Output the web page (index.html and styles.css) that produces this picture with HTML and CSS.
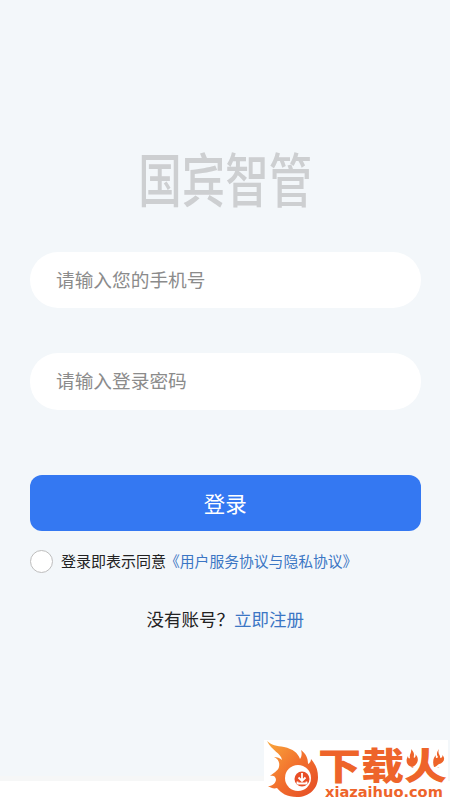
FILE: index.html
```
<!DOCTYPE html>
<html lang="zh-CN">
<head>
<meta charset="utf-8">
<title>国宾智管</title>
<link rel="stylesheet" href="styles.css">
</head>
<body>
<main class="screen">
  <h1 class="brand"><span class="brand-text">国宾智管</span></h1>
  <form class="form">
    <input class="field" type="tel" placeholder="请输入您的手机号">
    <input class="field" type="password" placeholder="请输入登录密码">
    <button class="submit" type="button">登录</button>
    <label class="agree"><span class="radio"></span><span class="agree-text">登录即表示同意<a class="link terms">《用户服务协议与隐私协议》</a></span></label>
  </form>
  <p class="register">没有账号？<a class="link">立即注册</a></p>
</main>
<aside class="mark">
  <svg class="flame" viewBox="0 0 54 60" aria-hidden="true">
    <defs>
      <linearGradient id="fire" x1="0" y1="0" x2="1" y2="1">
        <stop offset="0" stop-color="#f9a83c"/>
        <stop offset=".5" stop-color="#f2702d"/>
        <stop offset="1" stop-color="#e44a25"/>
      </linearGradient>
    </defs>
    <path fill="url(#fire)" d="M3 1C7 5 13 6 20 7C29 9 34 13 36 19C38 16 38 13 37 10C42 14 44 18 44 24C46 23 47 21 47 19C52 25 54 30 54 37C54 49 45 57 33 57C23 57 17 53 13 48C10 49 7 48 4 46C8 46 11 44 12 40C12 36 9 35 6 36C9 33 14 31 15 27C16 22 14 19 10 17C13 17 16 18 18 20C17 13 8 11 3 1Z"/>
    <circle cx="34" cy="38" r="13" fill="#fff"/>
    <circle cx="38" cy="39" r="7.500" fill="#e84e26"/>
    <path fill="none" stroke="#fff" stroke-width="1.800" d="M38 33V40M34.500 37.500L38 41L41.500 37.500M33.500 41.500V43.500H42.500V41.500"/>
  </svg>
  <div class="mark-words">
    <div class="mark-name">下载火</div>
    <div class="mark-url">xiazaihuo.com</div>
  </div>
  <svg class="sparks" viewBox="0 0 40 18" aria-hidden="true">
    <rect width="12" height="18" fill="#fff"/><rect x="27" width="13" height="18" fill="#fff"/>
    <path fill="#ee642a" d="M5 0C10 5 7 7 8 9C10 8 10 6 9 5C14 9 12 16 6 18C1 17-1 12 2 7C2 9 3 10 4 9C3 5 6 4 5 0ZM33 0C31 5 35 6 34 9C36 9 37 7 36 6C40 9 38 14 33 15C31 16 30 18 28 18C26 12 28 8 30 6C29 9 31 10 32 8C30 5 31 3 33 0Z"/>
  </svg>
</aside>
</body>
</html>
```
FILE: styles.css
```
* { box-sizing: border-box; }
body {
  margin: 0;
  height: 800px;
  position: relative;
  overflow: hidden;
  background: #fff;
  font-family: "Noto Sans CJK SC", sans-serif;
}
.screen {
  height: 781px;
  padding: 150px 29.500px 0 30px;
  background: #f3f7fa;
  border-bottom: 5px solid #f6f7f7;
}
.brand {
  margin: 0;
  height: 55px;
  display: flex;
  justify-content: center;
  align-items: center;
  color: #cdcfd1;
  font-size: 43.500px;
  font-weight: 500;
  line-height: 55px;
}
.brand-text { transform: scaleY(1.320); }
.form { display: flex; flex-direction: column; margin-top: 47px; }
.field {
  width: 100%;
  height: 56px;
  margin: 0 0 45px;
  padding: 0 26px 3px;
  border: 0;
  border-radius: 28px;
  background: #fff;
  font: 400 18.700px "Noto Sans CJK SC", sans-serif;
}
.field + .field { height: 57px; margin-bottom: 65px; padding-bottom: 4px; }
.field::placeholder { color: #8b8b8b; opacity: 1; }
.submit {
  height: 56px;
  padding: 0 0 2px;
  border: 0;
  border-radius: 12px;
  background: #3478f2;
  color: #fff;
  font: 400 21.500px "Noto Sans CJK SC", sans-serif;
}
.agree {
  display: flex;
  align-items: center;
  gap: 8px;
  height: 24px;
  margin-top: 18px;
  color: #222;
  font-size: 15px;
  white-space: nowrap;
}
.agree-text { padding-bottom: 2px; }
.radio {
  width: 23px;
  height: 23px;
  border: 1px solid #bdbdbd;
  border-radius: 50%;
  background: #fff;
}
.link { color: #3b76c4; }
.terms { margin-left: -1px; font-size: 14.800px; }
.register {
  margin: 33px 0 0;
  padding-left: 116.500px;
  color: #222;
  font-size: 17.500px;
  line-height: 26px;
}
.mark {
  position: absolute;
  left: 264px;
  top: 740px;
  width: 184px;
  height: 60px;
  display: flex;
  background: #fff;
  color: #ee642a;
}
.flame { width: 54px; height: 60px; flex: none; }
.mark-words { width: 130px; }
.mark-name {
  height: 43px;
  font-size: 43px;
  font-weight: 900;
  line-height: 48px;
  white-space: nowrap;
  transform: scaleY(.860);
}
.mark-url {
  padding-left: 7px;
  font: bold 14.600px/17px "DejaVu Sans", sans-serif;
  white-space: nowrap;
}
.sparks { position: absolute; left: 142px; top: 9px; width: 40px; height: 18px; }
```
